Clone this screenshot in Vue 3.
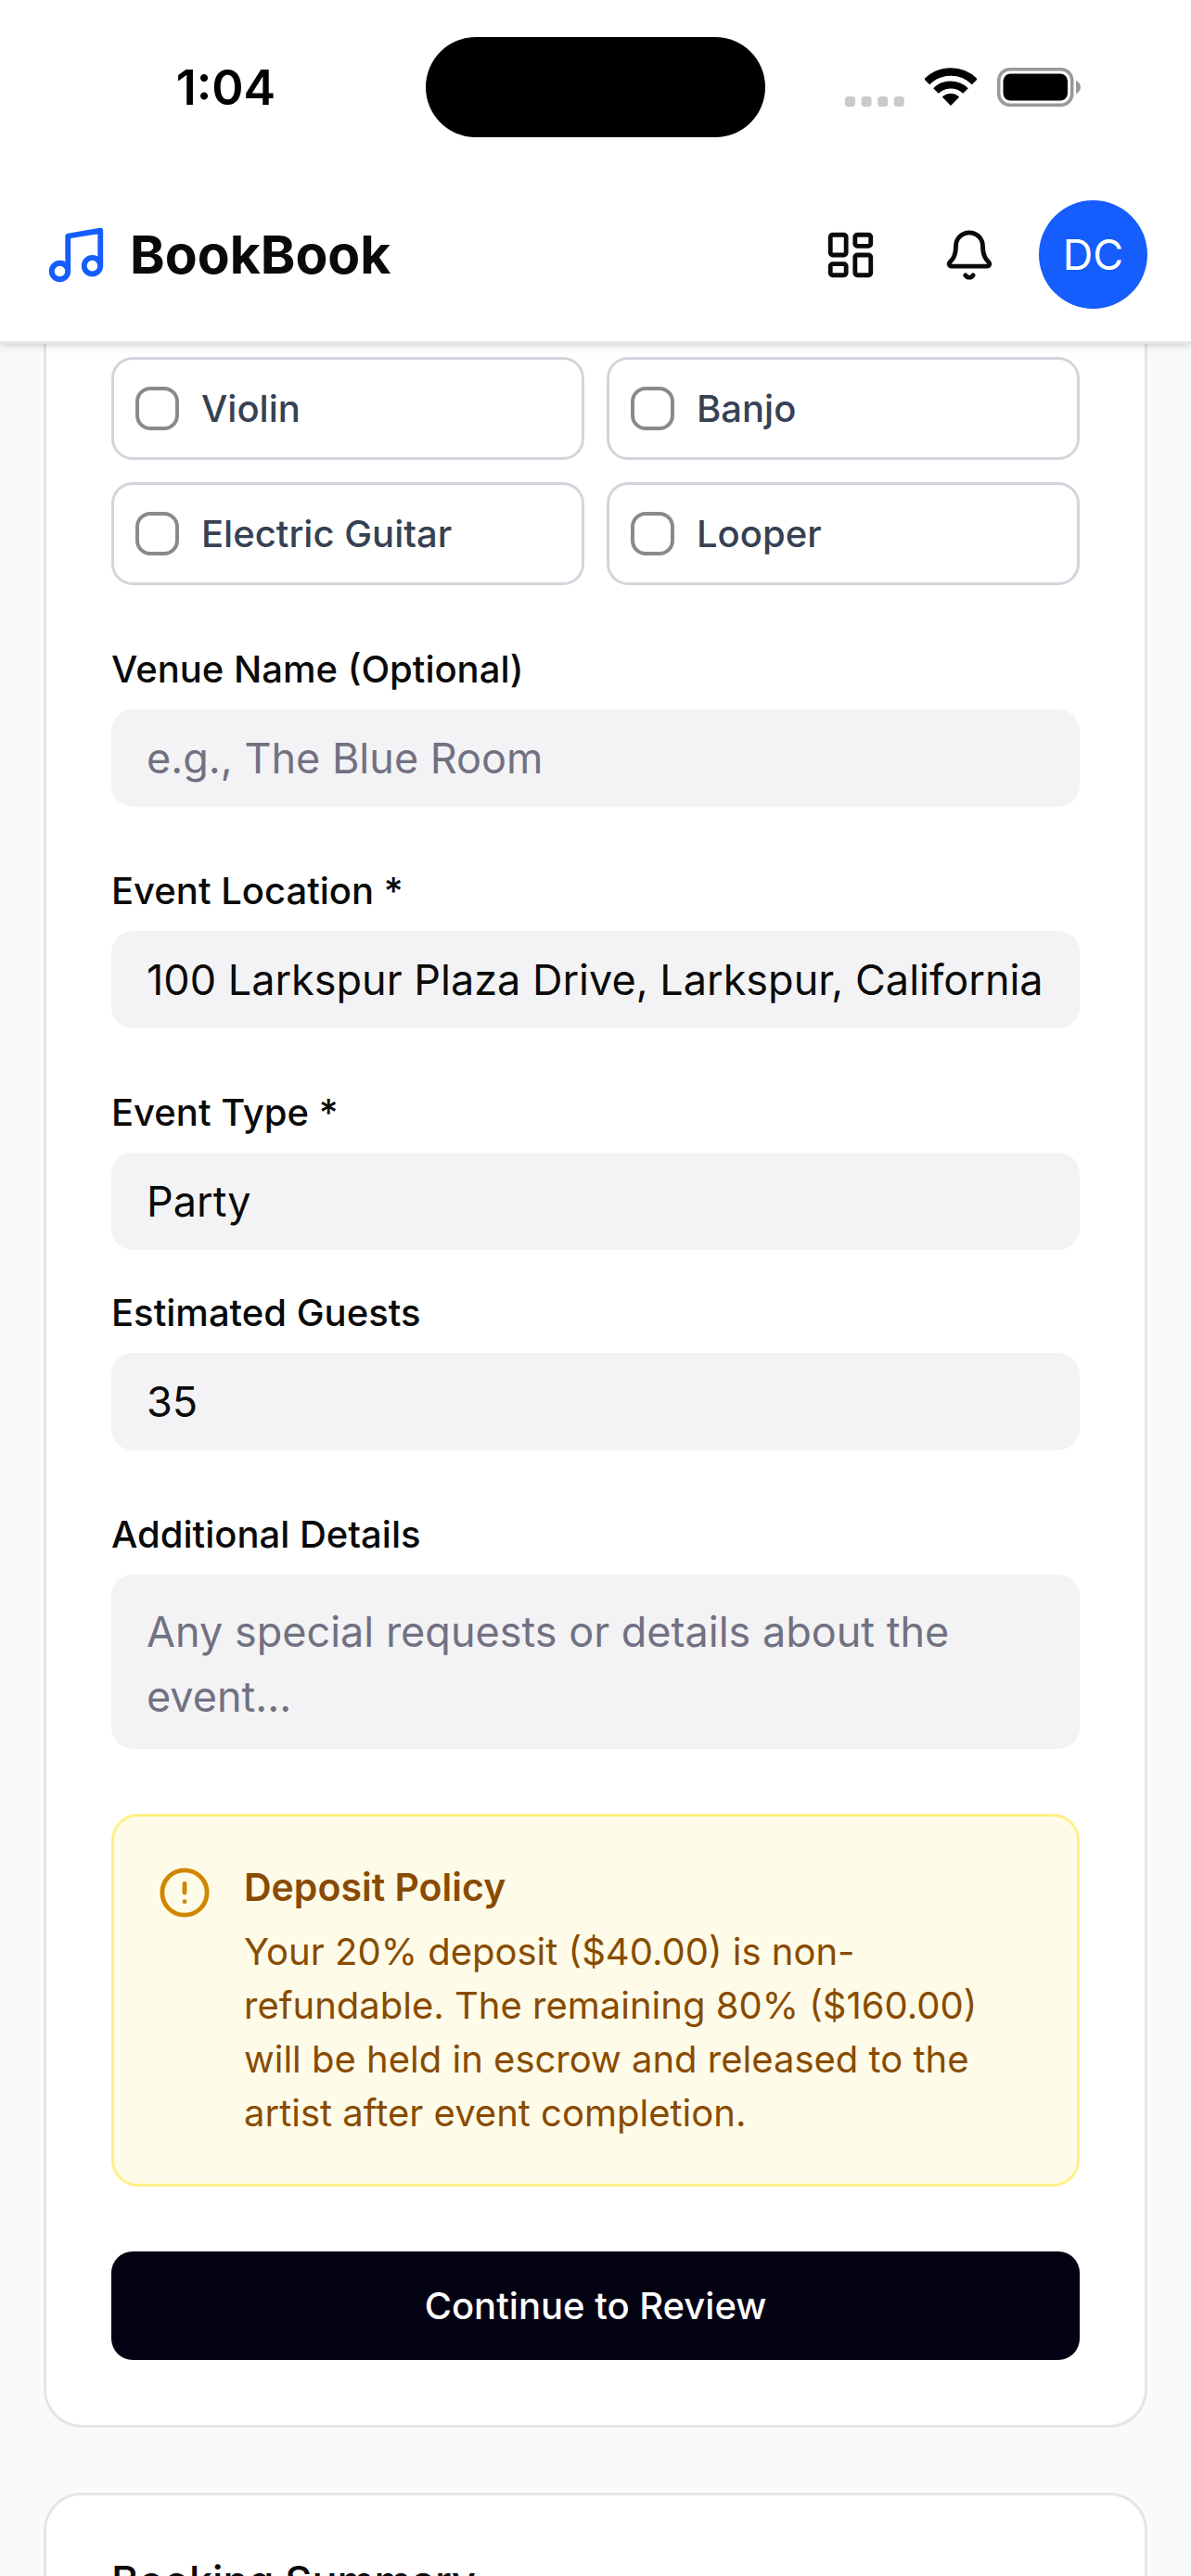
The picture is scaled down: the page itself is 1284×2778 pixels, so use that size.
<script setup>
import { ref } from 'vue'

const instruments = ref([
  { id: 'violin', name: 'Violin', checked: false },
  { id: 'banjo', name: 'Banjo', checked: false },
  { id: 'electric-guitar', name: 'Electric Guitar', checked: false },
  { id: 'looper', name: 'Looper', checked: false },
])

const venue = ref('')
const location = ref('100 Larkspur Plaza Drive, Larkspur, California')
const eventType = ref('Party')
const guests = ref('35')
const details = ref('')
</script>

<template>
  <div class="screen">
    <div class="status-bar">
      <span class="time">1:04</span>
      <span class="island"></span>
      <div class="indicators">
        <svg class="signal" width="64" height="11" viewBox="0 0 64 11" aria-hidden="true">
          <rect v-for="n in 4" :key="n" :x="(n - 1) * 17.6" width="11" height="11" rx="3.5" />
        </svg>
        <svg width="56" height="42" viewBox="0 0 56 42" fill="none" aria-hidden="true">
          <path d="M2.2 15.2a36.5 36.5 0 0 1 51.6 0" stroke="#000" stroke-width="8.5" />
          <path d="M12 25a22.7 22.7 0 0 1 32 0" stroke="#000" stroke-width="8" />
          <path d="M28 41l-8.6-8.8q-.6-.8.2-1.4a13.4 13.4 0 0 1 16.8 0q.8.6.2 1.4z" fill="#000" />
        </svg>
        <svg width="90" height="42" viewBox="0 0 90 42" fill="none" aria-hidden="true">
          <rect x="1.75" y="1.75" width="79" height="38.5" rx="12" stroke="#999" stroke-width="3.5" />
          <rect x="6.5" y="6.5" width="69.5" height="29" rx="8" fill="#000" />
          <path d="M85 14c3 1 5 4 5 7s-2 6-5 7z" fill="#999" />
        </svg>
      </div>
    </div>

    <header class="app-bar">
      <a class="brand" href="#">
        <svg class="line-icon" width="70" height="70" viewBox="0 0 24 24" aria-hidden="true">
          <path d="M9 18V5l12-2v13" />
          <circle cx="6" cy="18" r="3" />
          <circle cx="18" cy="16" r="3" />
        </svg>
        <span class="brand-name">BookBook</span>
      </a>
      <nav class="actions">
        <button class="icon-button" type="button" aria-label="Dashboard">
          <svg class="line-icon" width="58" height="58" viewBox="0 0 24 24" aria-hidden="true">
            <rect x="3" y="3" width="7" height="9" rx="1" />
            <rect x="14" y="3" width="7" height="5" rx="1" />
            <rect x="14" y="12" width="7" height="9" rx="1" />
            <rect x="3" y="16" width="7" height="5" rx="1" />
          </svg>
        </button>
        <button class="icon-button" type="button" aria-label="Notifications">
          <svg class="line-icon" width="58" height="58" viewBox="0 0 24 24" aria-hidden="true">
            <path d="M10.268 21a2 2 0 0 0 3.464 0" />
            <path d="M3.262 15.326A1 1 0 0 0 4 17h16a1 1 0 0 0 .74-1.673C19.41 13.956 18 12.499 18 8A6 6 0 0 0 6 8c0 4.499-1.411 5.956-2.738 7.326" />
          </svg>
        </button>
        <button class="avatar" type="button">DC</button>
      </nav>
    </header>

    <main class="content">
      <form class="card booking" @submit.prevent>
        <div class="instruments">
          <label v-for="item in instruments" :key="item.id" class="option">
            <input v-model="item.checked" type="checkbox" class="tick" />
            <span>{{ item.name }}</span>
          </label>
        </div>

        <div class="field">
          <label for="venue">Venue Name (Optional)</label>
          <input id="venue" v-model="venue" type="text" placeholder="e.g., The Blue Room" />
        </div>

        <div class="field">
          <label for="location">Event Location *</label>
          <input id="location" v-model="location" type="text" />
        </div>

        <div class="field-pair">
          <div class="field">
            <label for="event-type">Event Type *</label>
            <input id="event-type" v-model="eventType" type="text" />
          </div>
          <div class="field">
            <label for="guests">Estimated Guests</label>
            <input id="guests" v-model="guests" type="text" inputmode="numeric" />
          </div>
        </div>

        <div class="field">
          <label for="details">Additional Details</label>
          <textarea id="details" v-model="details" rows="2" placeholder="Any special requests or details about the event..."></textarea>
        </div>

        <section class="policy">
          <svg class="line-icon policy-icon" width="58" height="58" viewBox="0 0 24 24" aria-hidden="true">
            <circle cx="12" cy="12" r="10" />
            <path d="M12 8v4M12 16h.01" />
          </svg>
          <div class="policy-text">
            <h3>Deposit Policy</h3>
            <p>Your 20% deposit ($40.00) is non-refundable. The remaining 80% ($160.00) will be held in escrow and released to the artist after event completion.</p>
          </div>
        </section>

        <button class="submit" type="submit">Continue to Review</button>
      </form>

      <section class="card summary">
        <h2>Booking Summary</h2>
      </section>
    </main>
  </div>
</template>

<style>
body {
  margin: 0;
  background: #f9fafb;
}
</style>

<style scoped>
.screen {
  display: flex;
  flex-direction: column;
  height: 100vh;
  overflow: hidden;
  background: #f9fafb;
  color: #0a0a0a;
  font-family: Inter, "Liberation Sans", sans-serif;
  font-size: 40px;
}

.screen *,
.screen *::before {
  box-sizing: border-box;
}

button,
input,
textarea {
  margin: 0;
  border: 0;
  font: inherit;
  color: inherit;
}

h2,
h3,
p {
  margin: 0;
}

.status-bar {
  display: grid;
  grid-template-columns: 1fr 366px 1fr;
  align-items: center;
  flex: none;
  position: relative;
  z-index: 2;
  padding: 40px 0 33px;
  background: #fff;
}

.time {
  padding-left: 28px;
  text-align: center;
  font-size: 52px;
  font-weight: 600;
  color: #000;
}

.island {
  height: 108px;
  border-radius: 54px;
  background: #000;
}

.indicators {
  display: flex;
  align-items: flex-end;
  justify-content: center;
  gap: 22px;
  padding-right: 33px;
}

.signal {
  fill: #cacaca;
}

.app-bar {
  display: flex;
  align-items: center;
  justify-content: space-between;
  flex: none;
  position: relative;
  z-index: 1;
  padding: 35px 47px;
  border-bottom: 3px solid #e5e5e5;
  background: #fff;
  box-shadow: 0 3px 9px rgba(0, 0, 0, 0.1), 0 3px 6px -3px rgba(0, 0, 0, 0.1);
}

.line-icon {
  display: block;
  flex: none;
  fill: none;
  stroke: currentColor;
  stroke-width: 2;
  stroke-linecap: round;
  stroke-linejoin: round;
}

.brand {
  display: flex;
  align-items: center;
  gap: 23px;
  color: #155dfc;
  text-decoration: none;
}

.brand-name {
  color: #0a0a0a;
  font-size: 57px;
  font-weight: 700;
}

.actions {
  display: flex;
  align-items: center;
  gap: 23px;
}

.icon-button {
  display: grid;
  place-items: center;
  width: 105px;
  height: 105px;
  padding: 0;
  background: none;
}

.avatar {
  width: 117px;
  height: 117px;
  padding: 0;
  border-radius: 50%;
  background: #155dfc;
  color: #fff;
  font-size: 45px;
}

.content {
  display: flex;
  flex-direction: column;
  flex: 1;
  gap: 70px;
  min-height: 0;
  padding: 0 47px;
  overflow: hidden;
}

.card {
  flex: none;
  border: 3px solid #e5e5e5;
  border-radius: 41px;
  background: #fff;
}

.booking {
  display: flex;
  flex-direction: column;
  gap: 70px;
  padding: 14px 70px 70px;
  border-top: 0;
  border-radius: 0 0 41px 41px;
}

.instruments {
  display: grid;
  grid-template-columns: 1fr 1fr;
  gap: 24px;
}

.option {
  display: flex;
  align-items: center;
  gap: 24px;
  height: 111px;
  padding: 0 23px;
  border: 3px solid #d1d5dc;
  border-radius: 23px;
  color: #364153;
  font-weight: 500;
}

.tick {
  appearance: none;
  flex: none;
  width: 47px;
  height: 47px;
  border: 4px solid #8a8a8d;
  border-radius: 16px;
  background: #fff;
}

.tick:checked {
  border-color: #155dfc;
  background: #155dfc;
}

.field {
  display: flex;
  flex-direction: column;
  gap: 23px;
}

.field-pair {
  display: flex;
  flex-direction: column;
  gap: 47px;
}

.field label {
  font-weight: 500;
  line-height: 41px;
}

.field input,
.field textarea {
  display: block;
  width: 100%;
  border-radius: 23px;
  background: #f3f3f5;
  font-size: 45px;
}

.field input {
  height: 105px;
  padding: 0 38px;
}

.field textarea {
  height: 188px;
  padding: 27px 38px;
  line-height: 70px;
  resize: none;
  overflow: hidden;
}

.field ::placeholder {
  color: #717182;
  opacity: 1;
}

.policy {
  display: flex;
  gap: 35px;
  padding: 47px;
  border: 3px solid #fff085;
  border-radius: 29px;
  background: #fefce8;
  color: #894b00;
  line-height: 58px;
}

.policy-icon {
  margin-top: 6px;
  color: #d08700;
}

.policy-text {
  display: flex;
  flex-direction: column;
  gap: 12px;
}

.policy h3 {
  font-size: 41px;
  font-weight: 600;
}

.submit {
  height: 117px;
  border-radius: 23px;
  background: #030213;
  color: #fff;
  font-weight: 500;
}

.summary {
  padding: 70px;
}

.summary h2 {
  font-size: 45px;
  font-weight: 500;
  line-height: 46px;
}
</style>
